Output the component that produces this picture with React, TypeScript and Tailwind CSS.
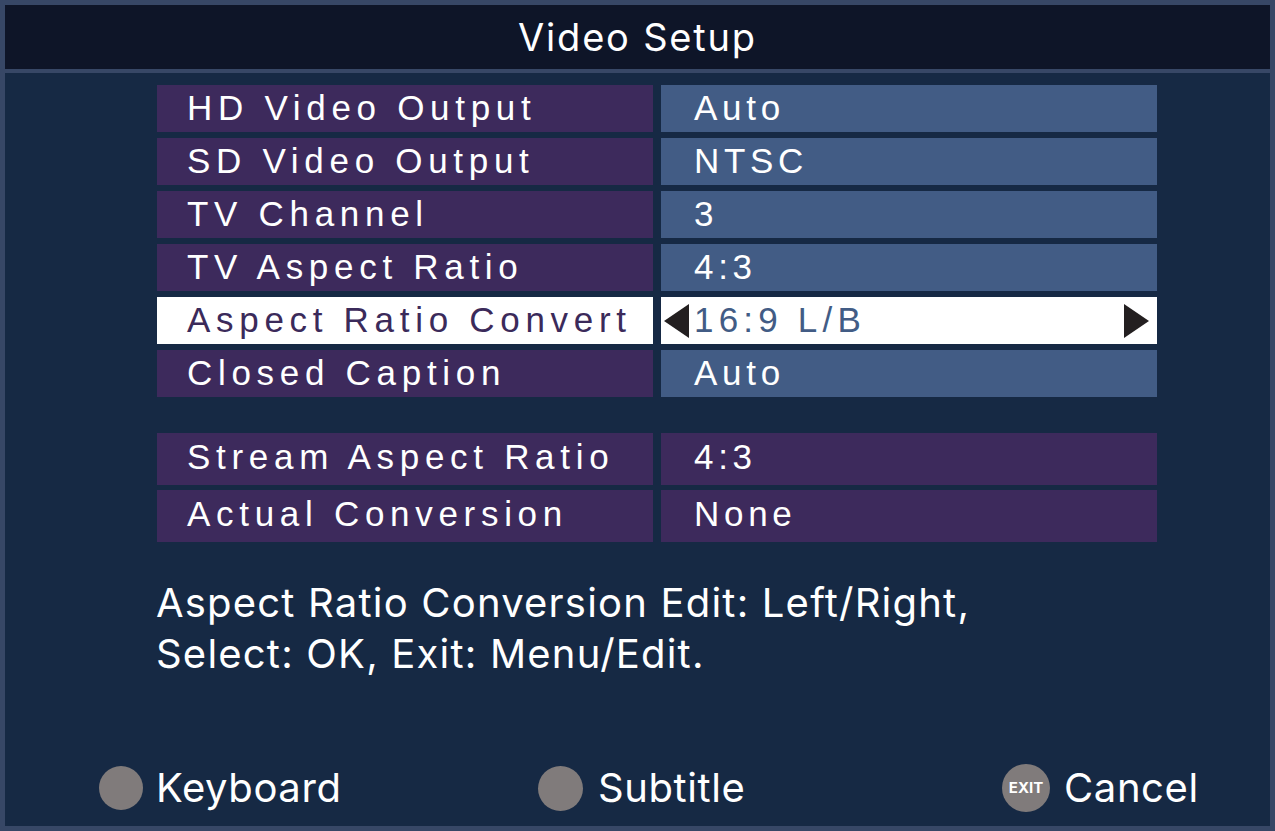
import React from "react";

const menuFont = { fontFamily: '"Liberation Sans", Arial, sans-serif' };
const uiFont = { fontFamily: 'Inter, "Liberation Sans", sans-serif' };

const rows: { label: string; value: string; selected?: boolean }[] = [
  { label: "HD Video Output", value: "Auto" },
  { label: "SD Video Output", value: "NTSC" },
  { label: "TV Channel", value: "3" },
  { label: "TV Aspect Ratio", value: "4:3" },
  { label: "Aspect Ratio Convert", value: "16:9 L/B", selected: true },
  { label: "Closed Caption", value: "Auto" },
];

const info = [
  { label: "Stream Aspect Ratio", value: "4:3" },
  { label: "Actual Conversion", value: "None" },
];

function Row({ label, value, selected }: { label: string; value: string; selected?: boolean }) {
  return (
    <div className="flex h-[47px] gap-[8px]">
      <div
        className={`w-[496px] flex items-center pl-[30px] text-[35px] tracking-[5.7px] ${
          selected ? "bg-white text-[#3b2a5a]" : "bg-[#3d2a5c] text-white"
        }`}
        style={menuFont}
      >
        {label}
      </div>
      {selected ? (
        <div className="w-[496px] flex items-center bg-white pl-[3px] pr-[8px]" style={menuFont}>
          <svg width="25" height="34" viewBox="0 0 25 34" className="shrink-0">
            <polygon points="25,0 25,34 0,17" fill="#231f20" />
          </svg>
          <span className="ml-[5px] text-[35px] tracking-[5.2px] text-[#425c85] flex-1">{value}</span>
          <svg width="25" height="34" viewBox="0 0 25 34" className="shrink-0">
            <polygon points="0,0 0,34 25,17" fill="#231f20" />
          </svg>
        </div>
      ) : (
        <div
          className="w-[496px] flex items-center pl-[33px] bg-[#425c85] text-white text-[35px] tracking-[4.7px]"
          style={menuFont}
        >
          {value}
        </div>
      )}
    </div>
  );
}

function InfoRow({ label, value }: { label: string; value: string }) {
  return (
    <div className="flex h-[52px] gap-[8px]">
      <div
        className="w-[496px] flex items-center pl-[30px] pb-[3px] bg-[#3d2a5c] text-white text-[35px] tracking-[5.7px]"
        style={menuFont}
      >
        {label}
      </div>
      <div
        className="w-[496px] flex items-center pl-[33px] pb-[3px] bg-[#3d2a5c] text-white text-[35px] tracking-[4.7px]"
        style={menuFont}
      >
        {value}
      </div>
    </div>
  );
}

export default function App() {
  return (
    <div className="w-[1275px] h-[831px] bg-[#374766] p-[5px] flex flex-col" style={uiFont}>
      <div className="h-[64px] shrink-0 bg-[#0e1528] flex items-center justify-center text-white text-[38px] tracking-[1.8px]">
        Video Setup
      </div>
      <div className="h-[4px] shrink-0" />
      <div className="flex-1 bg-[#162944] flex flex-col pt-[12px]">
        <div className="pl-[152px] flex flex-col gap-[6px]">
          {rows.map((r) => (
            <Row key={r.label} {...r} />
          ))}
        </div>
        <div className="pl-[152px] mt-[36px] flex flex-col gap-[5px]">
          {info.map((r) => (
            <InfoRow key={r.label} {...r} />
          ))}
        </div>
        <div className="pl-[151px] mt-[35px] text-white text-[40px] leading-[51px] tracking-[1.2px]">
          <div>Aspect Ratio Conversion Edit: Left/Right,</div>
          <div>Select: OK, Exit: Menu/Edit.</div>
        </div>
        <div className="mt-auto pb-[8px] pl-[94px] flex items-center text-white text-[40px] tracking-[0.6px]">
          <div className="w-[439px] flex items-center gap-[13px]">
            <div className="w-[44px] h-[44px] rounded-full bg-[#807b7b]" />
            <span>Keyboard</span>
          </div>
          <div className="w-[464px] flex items-center gap-[15px]">
            <div className="w-[45px] h-[45px] rounded-full bg-[#807b7b]" />
            <span>Subtitle</span>
          </div>
          <div className="flex items-center gap-[14px]">
            <div className="w-[48px] h-[48px] rounded-full bg-[#807b7b] flex items-center justify-center text-white text-[15px] font-bold tracking-normal">
              EXIT
            </div>
            <span>Cancel</span>
          </div>
        </div>
      </div>
    </div>
  );
}
